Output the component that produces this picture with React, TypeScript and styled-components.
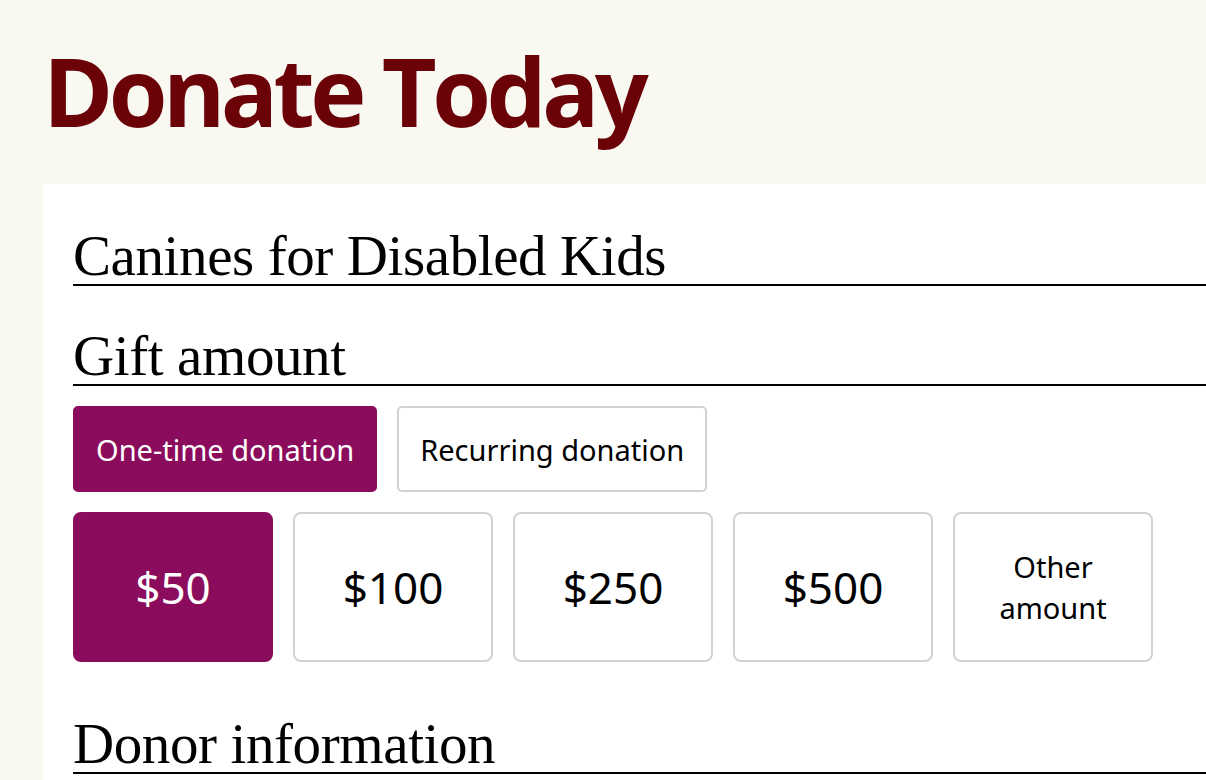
import React from "react";
import styled, { createGlobalStyle } from "styled-components";

const Global = createGlobalStyle`
  html, body { margin: 0; padding: 0; background: #f9f8f1; }
  body { font-family: "Open Sans", sans-serif; }
`;

const Page = styled.div`
  display: flex;
  flex-direction: column;
  min-height: 780px;
`;

const Title = styled.h1`
  margin: 0;
  padding: 43px 0 0 43px;
  height: 184px;
  box-sizing: border-box;
  font-family: "Open Sans", sans-serif;
  font-weight: 700;
  font-size: 95px;
  line-height: 95px;
  letter-spacing: -4.6px;
  color: #6b0207;
`;

const Card = styled.main`
  margin-left: 43px;
  background: #ffffff;
  padding: 43px 0 0 30px;
  display: flex;
  flex-direction: column;
  flex: 1;
`;

const SectionTitle = styled.h2<{ $top?: number }>`
  margin: ${(p) => p.$top ?? 0}px 0 0 0;
  font-family: "Liberation Serif", "Times New Roman", serif;
  font-weight: 400;
  font-size: 57px;
  line-height: 57px;
  letter-spacing: -0.4px;
  color: #000;
  border-bottom: 2px solid #000;
  white-space: nowrap;
`;

const ToggleRow = styled.div`
  display: flex;
  gap: 20px;
  margin-top: 20px;
`;

const Toggle = styled.button<{ $active?: boolean }>`
  height: 86px;
  padding: 0 21px;
  border-radius: 5px;
  border: 2px solid ${(p) => (p.$active ? "#8b0c5c" : "#d2d2d6")};
  background: ${(p) => (p.$active ? "#8b0c5c" : "#fff")};
  color: ${(p) => (p.$active ? "#fff" : "#000")};
  font-family: "Noto Sans", sans-serif;
  font-size: 29px;
  cursor: pointer;
`;

const AmountRow = styled.div`
  display: flex;
  gap: 20px;
  margin-top: 20px;
`;

const Amount = styled.button<{ $active?: boolean; $small?: boolean }>`
  width: 200px;
  height: 150px;
  border-radius: 8px;
  border: 2px solid ${(p) => (p.$active ? "#8b0c5c" : "#d2d2d6")};
  background: ${(p) => (p.$active ? "#8b0c5c" : "#fff")};
  color: ${(p) => (p.$active ? "#fff" : "#000")};
  font-family: "Noto Sans", sans-serif;
  font-size: ${(p) => (p.$small ? 29 : 44)}px;
  line-height: ${(p) => (p.$small ? "41px" : "1.2")};
  padding: 0 20px;
  cursor: pointer;
`;

export default function App() {
  return (
    <Page>
      <Global />
      <Title>Donate Today</Title>
      <Card>
        <SectionTitle>Canines for Disabled Kids</SectionTitle>
        <SectionTitle $top={41}>Gift amount</SectionTitle>
        <ToggleRow>
          <Toggle $active>One-time donation</Toggle>
          <Toggle>Recurring donation</Toggle>
        </ToggleRow>
        <AmountRow>
          <Amount $active>$50</Amount>
          <Amount>$100</Amount>
          <Amount>$250</Amount>
          <Amount>$500</Amount>
          <Amount $small>Other amount</Amount>
        </AmountRow>
        <SectionTitle $top={53}>Donor information</SectionTitle>
      </Card>
    </Page>
  );
}
